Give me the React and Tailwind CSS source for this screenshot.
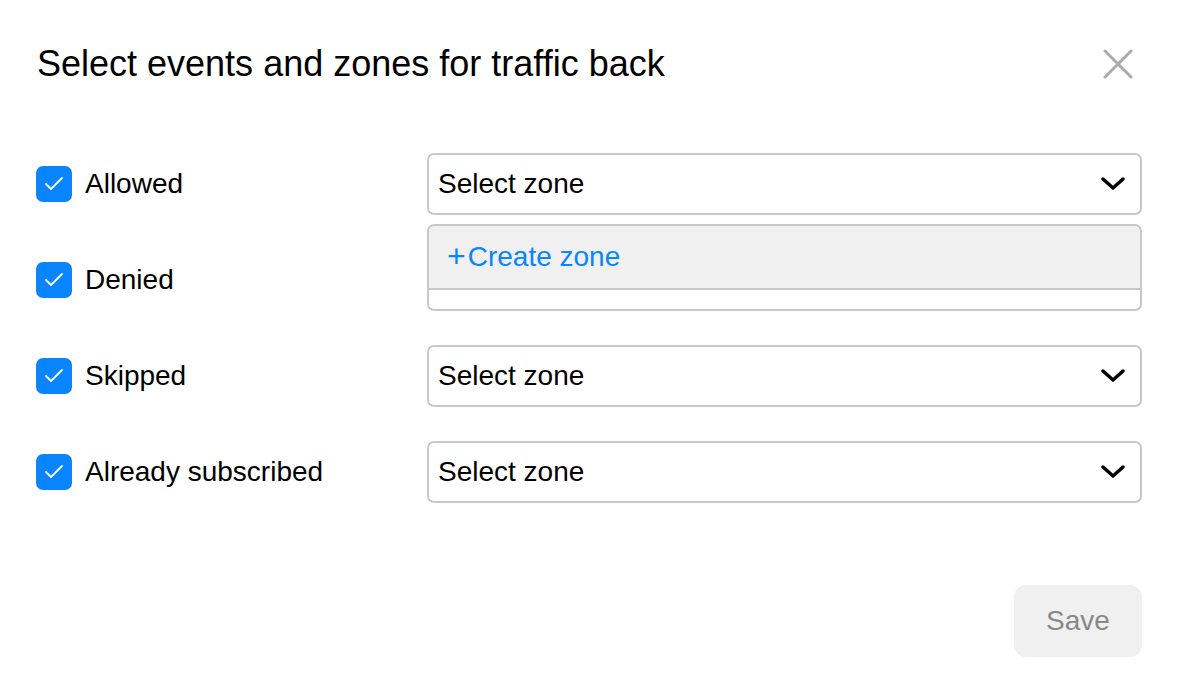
import { Check } from "lucide-react";

const events = ["Allowed", "Denied", "Skipped", "Already subscribed"];

function Chevron() {
  return (
    <svg width="26" height="16" viewBox="0 0 26 16" fill="none">
      <path d="M3 3l10 9 10-9" stroke="#000" strokeWidth="3.5" strokeLinecap="round" strokeLinejoin="round" />
    </svg>
  );
}

export default function App() {
  return (
    <div className="w-[1180px] h-[698px] bg-white text-black font-['Liberation_Sans',Arial,sans-serif] pl-[36px] pr-[38px] pt-[44px]">
      <div className="flex items-center justify-between h-[40px]">
        <h1 className="text-[36px] leading-none pl-px">Select events and zones for traffic back</h1>
        <button className="mr-[4px] w-[40px] h-[40px] flex items-center justify-center">
          <svg width="30" height="30" viewBox="0 0 30 30">
            <path d="M2 2l26 26M28 2L2 28" stroke="#ababab" strokeWidth="3" strokeLinecap="round" />
          </svg>
        </button>
      </div>

      <div className="mt-[69px] flex flex-col gap-[34px]">
        {events.map((label, i) => (
          <div key={label} className="relative flex items-center h-[62px]">
            <div className="w-[391px] flex items-center gap-[13px]">
              <span className="w-[36px] h-[36px] rounded-[7px] bg-[#0a84ff] flex items-center justify-center">
                <Check className="w-[24px] h-[24px] text-white" strokeWidth={1.8} />
              </span>
              <span className="text-[28px]">{label}</span>
            </div>
            <div className="flex-1 h-[62px] border-2 border-[#c8c8c8] rounded-[7px] flex items-center justify-between pl-[9px] pr-[14px]">
              <span className="text-[28px]">{i === 1 ? "" : "Select zone"}</span>
              {i !== 1 && <Chevron />}
            </div>
            {i === 0 && (
              <div className="absolute z-10 left-[391px] right-0 top-[71px] h-[66px] bg-[#f0f0f0] border-2 border-[#c8c8c8] rounded-t-[7px] flex items-center pl-[18px] text-[#0a84ff] text-[28px]">
                <span className="text-[32px] leading-none mr-[2px] relative top-[-1px]">+</span>Create zone
              </div>
            )}
          </div>
        ))}
      </div>

      <div className="mt-[82px] flex justify-end">
        <button className="w-[128px] h-[72px] rounded-[12px] bg-[#f0f0f0] text-[#888] text-[28px]">Save</button>
      </div>
    </div>
  );
}
